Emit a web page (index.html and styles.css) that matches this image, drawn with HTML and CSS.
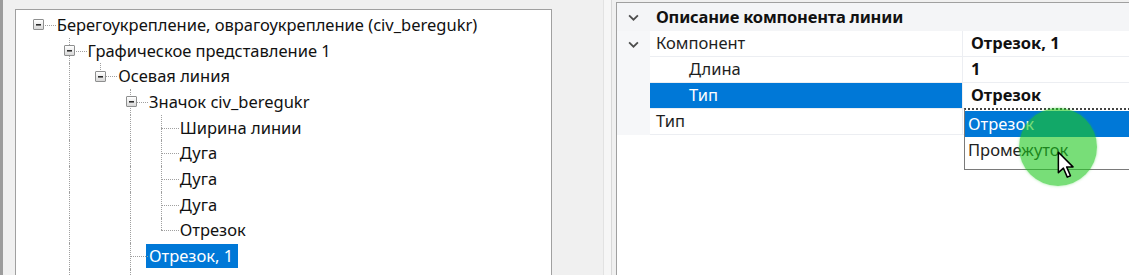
FILE: index.html
```html
<!DOCTYPE html>
<html lang="ru">
<head>
  <meta charset="UTF-8">
  <title>Описание компонента линии</title>
  <link rel="stylesheet" href="styles.css">
</head>
<body>
  <div class="edge"></div>

  <!-- дерево стиля -->
  <div class="tree">
    <div class="row">
      <span class="cell node"><i class="box"></i></span>
      <span class="label">Берегоукрепление, оврагоукрепление (civ_beregukr)</span>
    </div>
    <div class="row">
      <span class="cell"></span>
      <span class="cell node full"><i class="box"></i></span>
      <span class="label">Графическое представление 1</span>
    </div>
    <div class="row">
      <span class="cell"></span><span class="cell pipe"></span>
      <span class="cell node up"><i class="box"></i></span>
      <span class="label">Осевая линия</span>
    </div>
    <div class="row">
      <span class="cell"></span><span class="cell pipe"></span><span class="cell"></span>
      <span class="cell node full"><i class="box"></i></span>
      <span class="label">Значок civ_beregukr</span>
    </div>
    <div class="row">
      <span class="cell"></span><span class="cell pipe"></span><span class="cell"></span><span class="cell pipe"></span>
      <span class="cell node full"></span>
      <span class="label">Ширина линии</span>
    </div>
    <div class="row">
      <span class="cell"></span><span class="cell pipe"></span><span class="cell"></span><span class="cell pipe"></span>
      <span class="cell node full"></span>
      <span class="label">Дуга</span>
    </div>
    <div class="row">
      <span class="cell"></span><span class="cell pipe"></span><span class="cell"></span><span class="cell pipe"></span>
      <span class="cell node full"></span>
      <span class="label">Дуга</span>
    </div>
    <div class="row">
      <span class="cell"></span><span class="cell pipe"></span><span class="cell"></span><span class="cell pipe"></span>
      <span class="cell node full"></span>
      <span class="label">Дуга</span>
    </div>
    <div class="row">
      <span class="cell"></span><span class="cell pipe"></span><span class="cell"></span><span class="cell pipe"></span>
      <span class="cell node up"></span>
      <span class="label">Отрезок</span>
    </div>
    <div class="row">
      <span class="cell"></span><span class="cell pipe"></span><span class="cell"></span>
      <span class="cell node full"></span>
      <span class="label selected">Отрезок, 1</span>
    </div>
    <div class="row">
      <span class="cell"></span><span class="cell pipe"></span><span class="cell"></span>
      <span class="cell node full"></span>
      <span class="label">Отрезок, 1</span>
    </div>
  </div>

  <div class="splitter"><div class="grip"></div></div>

  <!-- сетка свойств -->
  <div class="props">
    <div class="grid">
      <span class="gut cat"><svg class="chev" viewBox="0 0 10 6"><polyline points="1,1 5,5 9,1"/></svg></span>
      <span class="cat cat-name">Описание компонента линии</span>

      <span class="gut"><svg class="chev" viewBox="0 0 10 6"><polyline points="1,1 5,5 9,1"/></svg></span>
      <span class="name">Компонент</span>
      <span class="val">Отрезок, 1</span>

      <span class="gut"></span>
      <span class="name sub">Длина</span>
      <span class="val">1</span>

      <span class="gut"></span>
      <span class="name sub active">Тип</span>
      <span class="val">Отрезок</span>

      <span class="gut"></span>
      <span class="name">Тип</span>
      <span class="val"></span>
    </div>

    <div class="dropdown">
      <div class="opt picked">Отрезок</div>
      <div class="opt">Промежуток</div>
    </div>
    <div class="click-spot"></div>
    <svg class="pointer" viewBox="0 0 14 22">
      <path d="M1 1 L1 17 L5 13.5 L8 20.5 L10.5 19.5 L7.5 12.5 L12.5 12.5 Z"/>
    </svg>
  </div>
</body>
</html>
```

FILE: styles.css
```css
:root {
  --win-bg: #f0f0f0;
  --frame: #a0a0a0;
  --dots: #a0a0a0;
  --sel: #0078d7;
  --line: #eceef2;
  --cat-bg: #f4f5f7;
  --text: #111;
}
html, body {
  margin: 0; padding: 0;
  height: 275px;
  overflow: hidden;
}
body {
  display: flex;
  align-items: flex-start;
  background: var(--win-bg);
  font-family: 'Noto Sans', 'Open Sans', sans-serif;
  font-size: 16.5px;
  color: var(--text);
}
.edge {
  width: 3px;
  height: 100%;
  background: #9c9c9c;
  flex: none;
}
.tree {
  flex: none;
  width: 537px;
  height: 300px;
  margin: 9px 0 0 12px;
  padding: 2px 0 0 7px;
  box-sizing: border-box;
  border: 1px solid var(--frame);
  background: #fff;
}
.row {
  display: flex;
  align-items: center;
  height: 25.7px;
}
.cell {
  position: relative;
  flex: none;
  width: 30.75px;
  height: 100%;
  display: flex;
  align-items: center;
  justify-content: center;
}
.pipe::before,
.node.up::before,
.node.full::before {
  content: '';
  position: absolute;
  left: 15px;
  top: 0;
  bottom: 0;
  border-left: 1px dotted var(--dots);
}
.node.up::before { bottom: 50%; }
.node::after {
  content: '';
  position: absolute;
  left: 15px; right: -2px;
  top: 50%;
  border-top: 1px dotted var(--dots);
}
.box {
  position: relative;
  z-index: 1;
  width: 9px; height: 9px;
  margin-left: 1px;
  border: 1px solid #8e8f8f;
  border-radius: 1px;
  background: linear-gradient(#fff, #d8d8d8);
  display: flex; align-items: center; justify-content: center;
}
.box::before {
  content: '';
  width: 5px; height: 1px;
  background: #2b2b2b;
  box-shadow: 0 1px 0 #777;
}
.label {
  padding: 0 3px 1px 3px;
  margin-left: 0;
  white-space: nowrap;
  line-height: 23px;
}
.label.selected {
  background: var(--sel);
  color: #fff;
  padding-right: 5px;
}
.splitter {
  flex: none;
  width: 64px;
  height: 100%;
  display: flex;
  justify-content: flex-end;
  padding-right: 4px;
  box-sizing: border-box;
}
.grip {
  width: 7px;
  height: 100%;
  border-left: 1px solid #e2e2e2;
  border-right: 1px solid #d8d8d8;
  background: #f6f6f6;
}
.props {
  position: relative;
  flex: 1;
  height: 300px;
  margin-top: 2px;
  border-left: 1px solid var(--frame);
  border-top: 1px solid var(--frame);
  background: #fff;
}
.grid {
  display: grid;
  grid-template-columns: 33px 313px 1fr;
  grid-auto-rows: 26px;
  grid-template-rows: 28px;
}
.gut {
  background: #f6f7f9;
  display: flex;
  align-items: center;
  justify-content: center;
}
.chev {
  width: 11px; height: 7px;
  fill: none;
  stroke: #4d4d4d;
  stroke-width: 1.6;
}
.cat { background: var(--cat-bg); }
.cat-name {
  grid-column: span 2;
  font-weight: 700;
  padding: 2px 0 0 6px;
  line-height: 24px;
  letter-spacing: -0.2px;
}
.name, .val {
  border-bottom: 1px solid var(--line);
  line-height: 24px;
  white-space: nowrap;
}
.name {
  padding-left: 6px;
  border-right: 1px solid var(--line);
  color: #1e1e1e;
}
.name.sub { padding-left: 39px; }
.name.active {
  background: var(--sel);
  color: #fff;
}
.val {
  padding-left: 8px;
  font-weight: 700;
}
.dropdown {
  position: absolute;
  left: 347px;
  top: 105px;
  width: 200px;
  height: 58px;
  padding-top: 1px;
  border: 1px solid #7a7a7a;
  border-top: 2px dotted #444;
  background: #fff;
}
.opt {
  height: 26px;
  line-height: 25px;
  padding-left: 3px;
  color: #222;
}
.opt.picked {
  background: var(--sel);
  color: #fff;
}
.click-spot {
  position: absolute;
  left: 402px;
  top: 105px;
  width: 78px;
  height: 78px;
  border-radius: 50%;
  background: rgba(30, 200, 30, 0.6);
  box-shadow: 0 0 3px rgba(30, 200, 30, 0.4);
}
.pointer {
  position: absolute;
  left: 440px;
  top: 148px;
  width: 18px;
  height: 28px;
  fill: #fff;
  stroke: #000;
  stroke-width: 1.2;
  stroke-linejoin: round;
}
```
